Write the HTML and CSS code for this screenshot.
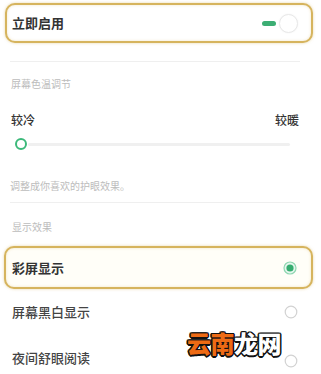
FILE: index.html
```html
<!DOCTYPE html>
<html lang="zh">
<head>
<meta charset="utf-8">
<link rel="stylesheet" href="styles.css">
</head>
<body>
<div class="page">
  <div class="hl hl-top">
    <span class="item-text">立即启用</span>
    <div class="toggle">
      <span class="toggle-bar"></span>
      <span class="toggle-knob"></span>
    </div>
  </div>
  <div class="divider div-1"></div>
  <div class="label label-1">屏幕色温调节</div>
  <div class="temp-row">
    <span>较冷</span>
    <span>较暖</span>
  </div>
  <div class="slider">
    <span class="slider-knob"></span>
    <span class="slider-track"></span>
  </div>
  <div class="label desc">调整成你喜欢的护眼效果。</div>
  <div class="divider div-2"></div>
  <div class="label label-2">显示效果</div>
  <div class="hl hl-mode">
    <span class="item-text">彩屏显示</span>
    <svg class="radio" width="14" height="14" viewBox="0 0 14 14"><circle cx="7" cy="7" r="6" fill="#e6f6ee" stroke="#8fd6b1" stroke-width="1.2"/><circle cx="7" cy="7" r="3.6" fill="#36ad70"/></svg>
  </div>
  <div class="row">
    <span class="item-text">屏幕黑白显示</span>
    <svg class="radio" width="14" height="14" viewBox="0 0 14 14"><circle cx="7" cy="7" r="5.8" fill="#fff" stroke="#d2d2d2" stroke-width="1.2"/></svg>
  </div>
  <div class="row row-last">
    <span class="item-text">夜间舒眼阅读</span>
    <svg class="radio" width="14" height="14" viewBox="0 0 14 14"><circle cx="7" cy="7" r="5.8" fill="#fff" stroke="#d2d2d2" stroke-width="1.2"/></svg>
  </div>
  <div class="watermark"><span class="wm-orange">云南</span><span class="wm-white">龙网</span></div>
</div>
</body>
</html>
```
FILE: styles.css
```css
* { box-sizing: border-box; }
html, body { margin: 0; padding: 0; background: #fff; }
body {
  font-family: "Noto Sans CJK SC", "Noto Sans", sans-serif;
  width: 321px;
  height: 374px;
  overflow: hidden;
}
.page {
  position: relative;
  padding-top: 3px;
  height: 374px;
}
.hl {
  display: flex;
  align-items: center;
  justify-content: space-between;
  margin: 0 8px 0 5px;
  border: 2px solid #d6b45e;
  border-radius: 10px;
  box-shadow: 0 0 3px rgba(214, 180, 94, 0.55), inset 0 0 3px rgba(214, 180, 94, 0.35);
  padding: 0 13px 0 5px;
}
.hl-top { height: 40px; background: #fff; }
.hl-mode { height: 43px; margin-top: 11px; margin-left: 4px; background: #fffef8; padding-right: 14px; padding-left: 6px; }
.item-text {
  font-size: 13px;
  font-weight: 700;
  color: #333;
  line-height: 16px;
}
.toggle { display: flex; align-items: center; gap: 3px; }
.toggle-bar {
  width: 14px; height: 5px; border-radius: 3px; background: #3cae74;
}
.toggle-knob {
  width: 19px; height: 19px; border-radius: 50%;
  background: #fff; border: 1px solid #e8e8e8;
  box-shadow: 0 0 2px rgba(0,0,0,0.06);
}
.divider { height: 1px; background: #efefef; margin-left: 10px; width: 290px; }
.div-1 { margin-top: 18px; }
.div-2 { margin-top: 8px; }
.label {
  font-size: 10px;
  line-height: 16px;
  color: #bcbcbc;
  padding-left: 11px;
}
.label-1 { margin-top: 14px; }
.desc { margin-top: 28px; padding-left: 10px; }
.label-2 { margin-top: 16px; padding-left: 12px; }
.temp-row {
  display: flex;
  justify-content: space-between;
  margin-top: 20px;
  padding: 0 22px 0 11px;
  font-size: 12px;
  line-height: 16px;
  color: #333;
  font-weight: 500;
}
.slider {
  display: flex;
  align-items: center;
  margin-top: 10px;
  height: 12px;
  padding-left: 15px;
}
.slider-knob {
  width: 12px; height: 12px; border-radius: 50%;
  border: 2.5px solid #3cb97a;
  background: #fff;
  flex: none;
}
.slider-track {
  height: 3px; width: 262px; background: #f0f0f0; border-radius: 2px; margin-left: 1px;
}
.row {
  display: flex;
  align-items: center;
  justify-content: space-between;
  height: 46px;
  padding: 0 23px 0 12px;
}
.row .item-text { font-weight: 500; color: #444; }
.row-last .radio { margin-top: 5px; }
.watermark {
  position: absolute;
  left: 187px;
  top: 327px;
  font-size: 24px;
  font-weight: 900;
  line-height: 32px;
  letter-spacing: -0.5px;
  text-shadow: -1.5px 0 #111, 1.5px 0 #111, 0 -1.5px #111, 0 1.5px #111, -1px -1px #111, 1px 1px #111, -1px 1px #111, 1px -1px #111;
}
.wm-orange { color: #ee6a14; }
.wm-white { color: #fff; }
```
